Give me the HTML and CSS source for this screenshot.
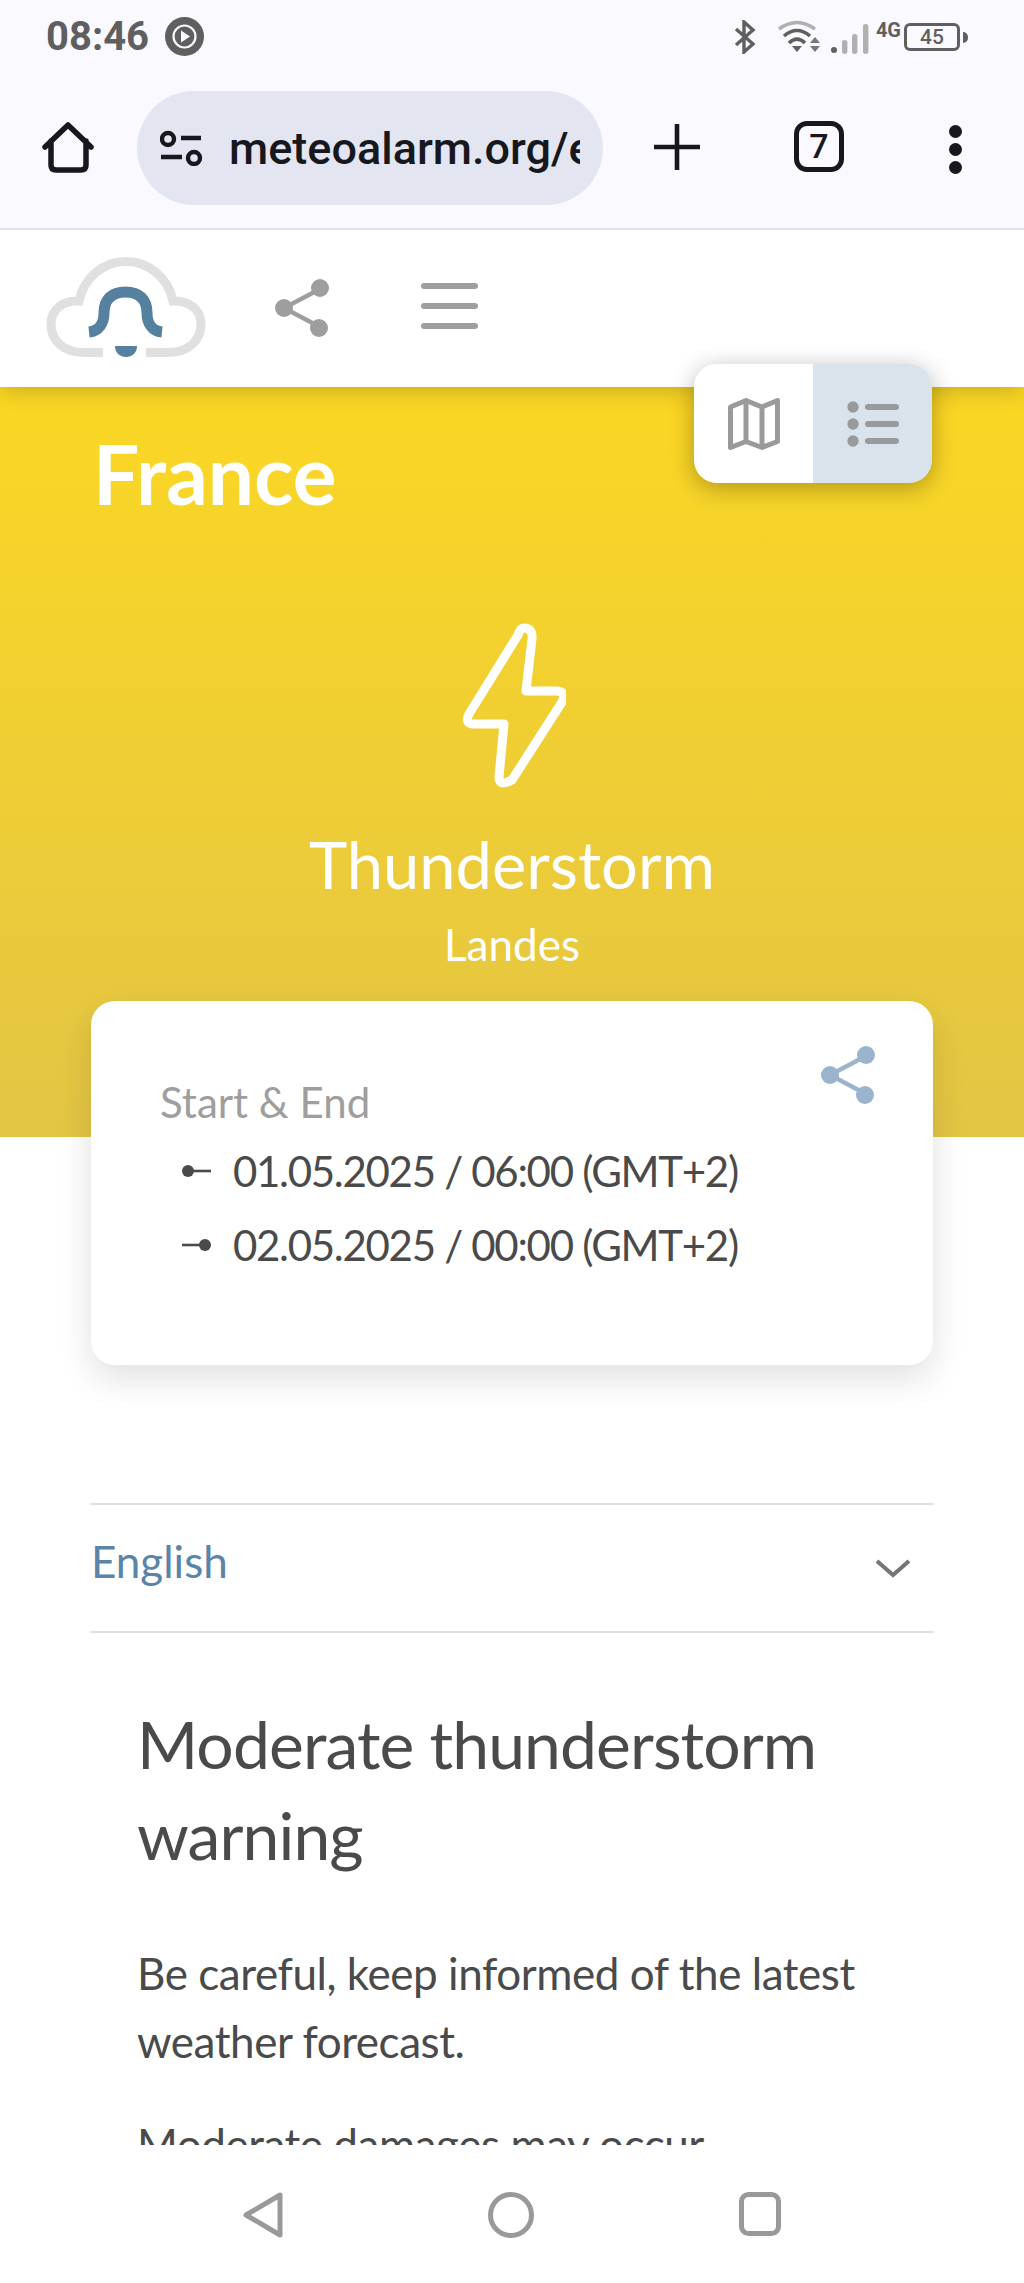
FILE: index.html
```html
<!DOCTYPE html>
<html lang="en">

<head>
    <meta charset="UTF-8">
    <meta name="viewport" content="width=device-width, initial-scale=1.0">
    <title>MeteoAlarm - France</title>
    <link rel="stylesheet" href="styles.css">
</head>

<body>

    <div class="browser">
        <div class="status-bar">
            <span class="clock">08:46</span>
            <svg class="play-icon" width="39" height="39" viewBox="0 0 39 39">
                <circle cx="19.5" cy="19.5" r="19.5" fill="#5f5f5f"/>
                <circle cx="19.5" cy="19.5" r="11" fill="none" stroke="#f9f9ff" stroke-width="2.2"/>
                <path d="M16 13.5 L25 19.5 L16 25.5 Z" fill="#f9f9ff"/>
            </svg>
            <div class="status-icons">
                <svg width="24" height="34" viewBox="0 0 24 34">
                    <path d="M3 9 L20 24 L11 32 V2 L20 10 L3 25" fill="none" stroke="#5f5f5f" stroke-width="3.4"/>
                </svg>
                <svg class="wifi" width="44" height="34" viewBox="0 0 44 34">
                    <path d="M2 9 Q20 -4 38 9" fill="none" stroke="#b0b0b0" stroke-width="3.4"/>
                    <path d="M7 16 Q20 5 33 16" fill="none" stroke="#5f5f5f" stroke-width="3.6"/>
                    <path d="M12 23 Q20 15 28 23" fill="none" stroke="#5f5f5f" stroke-width="3.6"/>
                    <path d="M15 26 H25 L20 32 Z" fill="#5f5f5f"/>
                    <path d="M33 23 L38 17 L43 23 Z M33 26 H43 L38 32 Z" fill="#777"/>
                </svg>
                <svg class="signal" width="38" height="32" viewBox="0 0 38 32">
                    <circle cx="3" cy="27" r="3" fill="#5f5f5f"/>
                    <rect x="11" y="17" width="5.4" height="14" rx="2.7" fill="#b0b0b0"/>
                    <rect x="21" y="11" width="5.4" height="20" rx="2.7" fill="#b0b0b0"/>
                    <rect x="32" y="1" width="5.4" height="30" rx="2.7" fill="#b0b0b0"/>
                </svg>
                <span class="net-type">4G</span>
                <div class="battery"><span class="battery-level">45</span></div>
                <div class="battery-nub"></div>
            </div>
        </div>

        <div class="toolbar">
            <svg class="home-icon" width="54" height="52" viewBox="0 0 54 52">
                <path d="M3 26 L26 4 L49 26 M9 20 V44 Q9 49 14 49 H39 Q44 49 44 44 V20" fill="none" stroke="#16181d" stroke-width="5.5" stroke-linecap="round" stroke-linejoin="round"/>
            </svg>
            <div class="url-pill">
                <svg width="44" height="36" viewBox="0 0 44 36">
                    <circle cx="8" cy="9" r="6" fill="none" stroke="#16181d" stroke-width="4.4"/>
                    <path d="M21 8 H41 M1 27 H22" stroke="#16181d" stroke-width="4.4"/>
                    <circle cx="34" cy="28" r="6" fill="none" stroke="#16181d" stroke-width="4.4"/>
                </svg>
                <span class="url-text">meteoalarm.org/en</span>
            </div>
            <svg class="plus-icon" width="46" height="46" viewBox="0 0 46 46">
                <path d="M23 0 V46 M0 23 H46" stroke="#16181d" stroke-width="4.6"/>
            </svg>
            <div class="tab-count">7</div>
            <div class="menu-dots"><i></i><i></i><i></i></div>
        </div>
    </div>

    <div class="page">
        <header class="site-header">
            <svg class="logo" width="160" height="101" viewBox="0 0 160 101">
                <path d="M57 95.5 H38 C17 95.5 5 83 5 67 C5 52 18 43 33 44 C38 20 58 4.5 80 4.5 C102 4.5 122 20 127 44 C142 43 155 52 155 67 C155 83 143 95.5 122 95.5 H100" fill="none" stroke="#e0e0e0" stroke-width="9"/>
                <path d="M43 75 C53 74 58 66 58 56 C58 42 66 35 79.5 35 C93 35 101 42 101 56 C101 66 106 74 116 75" fill="none" stroke="#55809f" stroke-width="11"/>
                <path d="M69 89 H91 C91 96 86 100 80 100 C74 100 69 96 69 89 Z" fill="#55809f"/>
            </svg>
            <svg class="share-icon" width="54" height="58" viewBox="0 0 54 58">
                <path d="M45 10 L9 29 L45 48" fill="none" stroke="#9e9e9e" stroke-width="4.4"/>
                <circle cx="45" cy="9" r="9" fill="#9e9e9e"/>
                <circle cx="9" cy="29" r="9" fill="#9e9e9e"/>
                <circle cx="44" cy="49" r="9" fill="#9e9e9e"/>
            </svg>
            <div class="hamburger"><i></i><i></i><i></i></div>
        </header>

        <div class="view-toggle">
            <div class="toggle-btn">
                <svg width="52" height="52" viewBox="0 0 52 52">
                    <path d="M2.5 9 L18 2.5 L34 9 L49.5 2.5 V43.5 L34 49.5 L18 43.5 L2.5 49.5 Z M18 2.5 V43.5 M34 9 V49.5" fill="none" stroke="#9a9a9a" stroke-width="5" stroke-linejoin="round"/>
                </svg>
            </div>
            <div class="toggle-btn active">
                <svg width="52" height="46" viewBox="0 0 52 46">
                    <circle cx="6" cy="6" r="5.7" fill="#9a9a9a"/>
                    <circle cx="6" cy="23" r="5.7" fill="#9a9a9a"/>
                    <circle cx="6" cy="40" r="5.7" fill="#9a9a9a"/>
                    <path d="M21 6 H49 M21 23 H49 M21 40 H49" stroke="#9a9a9a" stroke-width="6" stroke-linecap="round"/>
                </svg>
            </div>
        </div>

        <section class="hero">
            <h1 class="country">France</h1>
            <svg class="bolt" width="108" height="168" viewBox="-4 -2 108 168">
                <path d="M56 11 L7 90 Q2 100 12 100 H42 L37 153 Q37 163 50 156 L100 78 Q105 67 94 67 H64 L70 15 Q71 4 62 4 Q58 4 56 11 Z" fill="none" stroke="#fff" stroke-width="9" stroke-linejoin="round"/>
            </svg>
            <h2 class="event">Thunderstorm</h2>
            <p class="region">Landes</p>
        </section>

        <div class="card">
            <svg class="card-share" width="56" height="58" viewBox="0 0 54 58">
                <path d="M45 10 L9 29 L45 48" fill="none" stroke="#9ab4cd" stroke-width="4.4"/>
                <circle cx="45" cy="9" r="9" fill="#9ab4cd"/>
                <circle cx="9" cy="29" r="9" fill="#9ab4cd"/>
                <circle cx="44" cy="49" r="9" fill="#9ab4cd"/>
            </svg>
            <div class="card-label">Start &amp; End</div>
            <div class="date-row">
                <svg width="29" height="14" viewBox="0 0 29 14">
                    <circle cx="6" cy="7" r="6" fill="#4a4a4a"/>
                    <path d="M6 7 H29" stroke="#4a4a4a" stroke-width="2.6"/>
                </svg>
                <span>01.05.2025 / 06:00 (GMT+2)</span>
            </div>
            <div class="date-row">
                <svg width="29" height="14" viewBox="0 0 29 14">
                    <circle cx="23" cy="7" r="6" fill="#4a4a4a"/>
                    <path d="M0 7 H23" stroke="#4a4a4a" stroke-width="2.6"/>
                </svg>
                <span>02.05.2025 / 00:00 (GMT+2)</span>
            </div>
        </div>

        <div class="lang-select">
            <span>English</span>
            <svg width="36" height="20" viewBox="0 0 36 20">
                <path d="M2 3 L18 17 L34 3" fill="none" stroke="#757575" stroke-width="4"/>
            </svg>
        </div>

        <div class="content">
            <h3 class="warning-title">Moderate thunderstorm warning</h3>
            <p>Be careful, keep informed of the latest weather forecast.</p>
            <p>Moderate damages may occur</p>
        </div>
    </div>

    <nav class="nav-bar">
        <svg width="40" height="46" viewBox="0 0 40 46">
            <path d="M37 3 V43 L3 23 Z" fill="none" stroke="#999" stroke-width="5" stroke-linejoin="round"/>
        </svg>
        <svg width="46" height="46" viewBox="0 0 46 46">
            <circle cx="23" cy="23" r="20.5" fill="none" stroke="#999" stroke-width="5"/>
        </svg>
        <svg width="42" height="44" viewBox="0 0 42 44">
            <rect x="2.5" y="2.5" width="37" height="39" rx="7" fill="none" stroke="#999" stroke-width="5"/>
        </svg>
    </nav>

</body>

</html>
```

FILE: styles.css
```css
* {
    box-sizing: border-box;
}

html, body {
    height: 100%;
}

body {
    margin: 0;
    height: 2283px;
    display: flex;
    flex-direction: column;
    overflow: hidden;
    font-family: 'Lato', 'Noto Sans', sans-serif;
    color: #4a4a4a;
    background-color: #fff;
}

/* browser chrome */
.browser {
    height: 230px;
    flex: none;
    background-color: #f9f9ff;
    border-bottom: 2px solid #e3e3ea;
}

.status-bar {
    height: 72px;
    padding: 17px 56px 0 46px;
    display: flex;
    align-items: flex-start;
    color: #5f5f5f;
}

.clock {
    font-family: 'Roboto', sans-serif;
    font-weight: 700;
    font-size: 40px;
    line-height: 39px;
}

.play-icon {
    margin-left: 16px;
}

.status-icons {
    margin-left: auto;
    display: flex;
    align-items: flex-start;
    padding-top: 3px;
}

.wifi {
    margin-left: 20px;
}

.signal {
    margin-left: 10px;
    margin-top: 3px;
}

.net-type {
    margin-left: 7px;
    font-family: 'Roboto', sans-serif;
    font-weight: 700;
    font-size: 20px;
    line-height: 18px;
    margin-top: 1px;
}

.battery {
    margin-left: 3px;
    margin-top: 3px;
    width: 56px;
    height: 28px;
    border: 3px solid #5f5f5f;
    border-radius: 6px;
    text-align: center;
}

.battery-level {
    display: block;
    font-family: 'Roboto', sans-serif;
    font-weight: 500;
    font-size: 21px;
    line-height: 22px;
}

.battery-nub {
    width: 5px;
    height: 11px;
    margin: 12px 0 0 3px;
    background-color: #5f5f5f;
    border-radius: 0 6px 6px 0;
}

.toolbar {
    height: 156px;
    padding: 19px 0 0 42px;
    display: flex;
    align-items: flex-start;
}

.home-icon {
    margin-top: 30px;
}

.url-pill {
    width: 466px;
    height: 114px;
    margin-left: 41px;
    padding: 0 23px 0 23px;
    display: flex;
    align-items: center;
    gap: 25px;
    background-color: #e3e6f1;
    border-radius: 57px;
    overflow: hidden;
}

.url-pill svg {
    flex: none;
}

.url-text {
    flex: 1;
    overflow: hidden;
    white-space: nowrap;
    font-family: 'Roboto', sans-serif;
    font-weight: 500;
    font-size: 45px;
    color: #16181d;
}

.plus-icon {
    margin: 33px 0 0 51px;
}

.tab-count {
    width: 50px;
    height: 51px;
    margin: 30px 0 0 94px;
    border: 5px solid #16181d;
    border-radius: 13px;
    text-align: center;
    font-family: 'Roboto', sans-serif;
    font-weight: 500;
    font-size: 34px;
    line-height: 41px;
    color: #16181d;
}

.menu-dots {
    margin: 34px 0 0 105px;
    display: flex;
    flex-direction: column;
    gap: 5px;
}

.menu-dots i {
    display: block;
    width: 13px;
    height: 13px;
    border-radius: 50%;
    background-color: #16181d;
}

/* site */
.page {
    position: relative;
    flex: 1;
    min-height: 0;
    overflow: hidden;
}

.site-header {
    position: relative;
    z-index: 1;
    height: 157px;
    padding: 27px 0 0 46px;
    display: flex;
    align-items: flex-start;
    background-color: #fff;
    box-shadow: 0 4px 22px rgba(0, 0, 0, 0.2);
}

.share-icon {
    margin: 22px 0 0 69px;
}

.hamburger {
    margin: 26px 0 0 92px;
    width: 57px;
    display: flex;
    flex-direction: column;
    gap: 14px;
}

.hamburger i {
    display: block;
    height: 6px;
    border-radius: 3px;
    background-color: #9e9e9e;
}

.view-toggle {
    position: absolute;
    z-index: 2;
    top: 134px;
    left: 694px;
    width: 238px;
    height: 119px;
    display: flex;
    border-radius: 23px;
    overflow: hidden;
    box-shadow: 0 5px 24px rgba(0, 0, 0, 0.3);
}

.toggle-btn {
    flex: 1;
    display: flex;
    align-items: center;
    justify-content: center;
    background-color: #fff;
}

.toggle-btn.active {
    background-color: #d9e3ec;
}

.hero {
    height: 750px;
    padding: 36px 93px 0;
    text-align: center;
    color: #fff;
    background: linear-gradient(180deg, #fbd723 0%, #e3c545 100%);
}

.country {
    margin: 0;
    text-align: left;
    font-weight: 700;
    font-size: 82px;
    line-height: 100px;
}

.bolt {
    display: block;
    margin: 99px auto 0;
}

.event {
    margin: 34px 0 0;
    font-weight: 400;
    font-size: 65px;
    line-height: 80px;
}

.region {
    margin: 12px 0 0;
    font-size: 44px;
    line-height: 56px;
}

.card {
    position: relative;
    height: 364px;
    margin: -136px 91px 0;
    padding: 73px 47px 0 69px;
    background-color: #fff;
    border-radius: 24px;
    box-shadow: 0 14px 34px rgba(0, 0, 0, 0.12);
}

.card-share {
    position: absolute;
    top: 45px;
    right: 57px;
}

.card-label {
    margin-bottom: 4px;
    font-size: 42px;
    line-height: 56px;
    color: #9e9e9e;
}

.date-row {
    display: flex;
    align-items: center;
    gap: 22px;
    margin-left: 22px;
    height: 74px;
    font-size: 42px;
    letter-spacing: -1.3px;
    color: #4a4a4a;
}

.date-row svg {
    flex: none;
}

.lang-select {
    height: 130px;
    margin: 138px 91px 0;
    padding: 0 22px 14px 0;
    display: flex;
    align-items: center;
    justify-content: space-between;
    border-top: 2px solid #e0e0e0;
    border-bottom: 2px solid #e0e0e0;
    font-size: 44px;
    color: #5a84a8;
}

.lang-select svg {
    margin-top: 14px;
}

.content {
    padding: 65px 91px 0 137px;
}

.warning-title {
    margin: 0 0 59px;
    font-weight: 400;
    font-size: 66px;
    line-height: 91px;
    letter-spacing: -0.9px;
}

.content p {
    margin: 0 0 35px;
    font-size: 44px;
    line-height: 68px;
    letter-spacing: -0.45px;
}

.nav-bar {
    position: relative;
    height: 138px;
    flex: none;
    padding: 47px 0 0;
    background-color: #fff;
    display: flex;
    align-items: flex-start;
    justify-content: center;
    gap: 205px;
}
```
